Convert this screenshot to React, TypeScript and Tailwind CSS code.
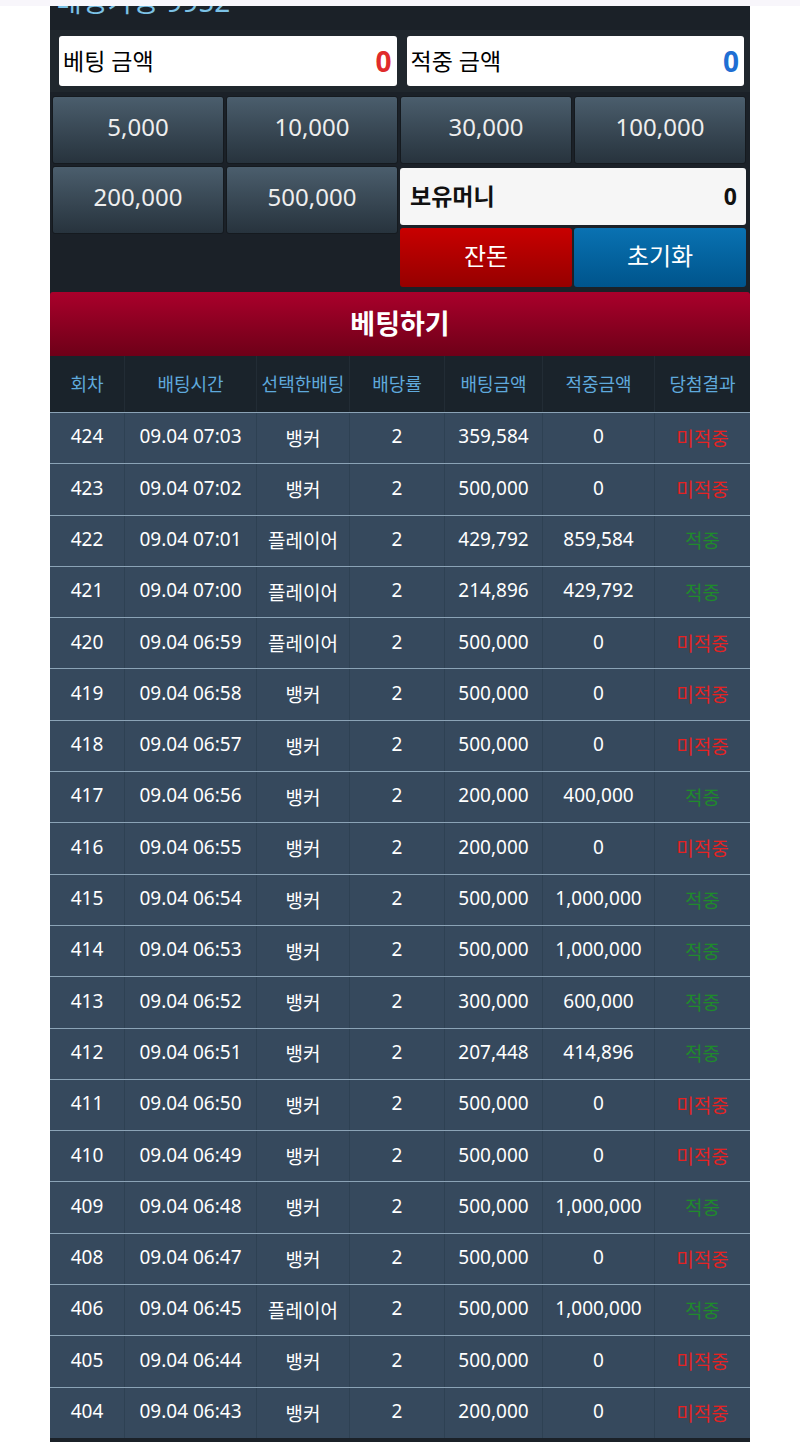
import React from "react";

type Row = {
  no: number;
  time: string;
  pick: string;
  rate: string;
  bet: string;
  win: string;
  hit: boolean;
};

const rows: Row[] = [
  { no: 424, time: "09.04 07:03", pick: "뱅커", rate: "2", bet: "359,584", win: "0", hit: false },
  { no: 423, time: "09.04 07:02", pick: "뱅커", rate: "2", bet: "500,000", win: "0", hit: false },
  { no: 422, time: "09.04 07:01", pick: "플레이어", rate: "2", bet: "429,792", win: "859,584", hit: true },
  { no: 421, time: "09.04 07:00", pick: "플레이어", rate: "2", bet: "214,896", win: "429,792", hit: true },
  { no: 420, time: "09.04 06:59", pick: "플레이어", rate: "2", bet: "500,000", win: "0", hit: false },
  { no: 419, time: "09.04 06:58", pick: "뱅커", rate: "2", bet: "500,000", win: "0", hit: false },
  { no: 418, time: "09.04 06:57", pick: "뱅커", rate: "2", bet: "500,000", win: "0", hit: false },
  { no: 417, time: "09.04 06:56", pick: "뱅커", rate: "2", bet: "200,000", win: "400,000", hit: true },
  { no: 416, time: "09.04 06:55", pick: "뱅커", rate: "2", bet: "200,000", win: "0", hit: false },
  { no: 415, time: "09.04 06:54", pick: "뱅커", rate: "2", bet: "500,000", win: "1,000,000", hit: true },
  { no: 414, time: "09.04 06:53", pick: "뱅커", rate: "2", bet: "500,000", win: "1,000,000", hit: true },
  { no: 413, time: "09.04 06:52", pick: "뱅커", rate: "2", bet: "300,000", win: "600,000", hit: true },
  { no: 412, time: "09.04 06:51", pick: "뱅커", rate: "2", bet: "207,448", win: "414,896", hit: true },
  { no: 411, time: "09.04 06:50", pick: "뱅커", rate: "2", bet: "500,000", win: "0", hit: false },
  { no: 410, time: "09.04 06:49", pick: "뱅커", rate: "2", bet: "500,000", win: "0", hit: false },
  { no: 409, time: "09.04 06:48", pick: "뱅커", rate: "2", bet: "500,000", win: "1,000,000", hit: true },
  { no: 408, time: "09.04 06:47", pick: "뱅커", rate: "2", bet: "500,000", win: "0", hit: false },
  { no: 406, time: "09.04 06:45", pick: "플레이어", rate: "2", bet: "500,000", win: "1,000,000", hit: true },
  { no: 405, time: "09.04 06:44", pick: "뱅커", rate: "2", bet: "500,000", win: "0", hit: false },
  { no: 404, time: "09.04 06:43", pick: "뱅커", rate: "2", bet: "200,000", win: "0", hit: false },
];

const cols = "grid grid-cols-[75px_132px_93px_95px_98px_112px_95px]";
const chip =
  "h-[68px] flex items-center justify-center pb-[6px] rounded-[3px] border border-[#151a1f] bg-gradient-to-b from-[#4b5e6d] to-[#27333d] text-[24px] text-[#eeeeee]";
const cell = "flex items-center justify-center border-r border-[#2e4153] last:border-r-0";
const headCell = "flex items-center justify-center border-r border-[#222c35] last:border-r-0";

export default function App() {
  return (
    <div className="min-h-[1442px] bg-white font-['Noto_Sans','Noto_Sans_CJK_KR',sans-serif]">
      <div className="h-[6px] bg-[#f8f6fb]" />
      <div className="mx-auto w-[700px] bg-[#1b2128]">
        {/* title, scrolled mostly out of view */}
        <div className="h-[24px] overflow-hidden pl-[6px]">
          <div className="-mt-[24px] text-[28px] leading-[38px] text-[#7cc2e6]">배팅가능 9952</div>
        </div>

        {/* amount boxes */}
        <div className="flex gap-[10px] bg-[#20272d] py-[6px] pl-[9px] pr-[6px]">
          <div className="flex h-[50px] flex-1 items-center justify-between rounded-[3px] bg-white pl-[4px] pr-[5px]">
            <span className="text-[23px] text-black">베팅 금액</span>
            <span className="text-[28px] font-bold text-[#e02b2b]">0</span>
          </div>
          <div className="flex h-[50px] flex-1 items-center justify-between rounded-[3px] bg-white pl-[4px] pr-[5px]">
            <span className="text-[23px] text-black">적중 금액</span>
            <span className="text-[28px] font-bold text-[#1f6fd3]">0</span>
          </div>
        </div>

        {/* chips */}
        <div className="grid grid-cols-4 gap-[2px] pb-[5px] pl-[2px] pr-[4px] pt-[4px]">
          <div className={chip}>5,000</div>
          <div className={chip}>10,000</div>
          <div className={chip}>30,000</div>
          <div className={chip}>100,000</div>
          <div className="col-span-2 grid grid-cols-2 gap-[2px] self-start">
            <div className={chip}>200,000</div>
            <div className={chip}>500,000</div>
          </div>
          <div className="col-span-2 flex flex-col gap-[3px] pt-[2px]">
            <div className="flex h-[57px] items-center justify-between rounded-[3px] bg-[#f6f6f6] pl-[10px] pr-[9px]">
              <span className="text-[23px] font-bold text-[#111]">보유머니</span>
              <span className="text-[23px] font-bold text-[#111]">0</span>
            </div>
            <div className="grid grid-cols-2 gap-[2px]">
              <div className="flex h-[59px] items-center justify-center rounded-[3px] bg-gradient-to-b from-[#c80000] to-[#960000] pb-[3px] text-[24px] text-white">
                잔돈
              </div>
              <div className="flex h-[59px] items-center justify-center rounded-[3px] bg-gradient-to-b from-[#0a72b2] to-[#00548c] pb-[3px] text-[24px] text-white">
                초기화
              </div>
            </div>
          </div>
        </div>

        {/* submit */}
        <div className="flex h-[64px] items-center justify-center rounded-t-[3px] bg-gradient-to-b from-[#aa002b] to-[#6e0018] text-[27px] font-bold text-white">
          베팅하기
        </div>

        {/* table header */}
        <div className={`${cols} h-[56px] bg-[#1a232b] text-[18px] text-[#5fa9dc]`}>
          {["회차", "배팅시간", "선택한배팅", "배당률", "배팅금액", "적중금액", "당첨결과"].map((h) => (
            <div key={h} className={headCell}>
              {h}
            </div>
          ))}
        </div>

        {/* rows */}
        {rows.map((r) => (
          <div
            key={r.no}
            className={`${cols} h-[51.3px] border-t border-[#8ba3b6] bg-[#36495d] text-[19px] text-white`}
          >
            <div className={`${cell} pb-[3px]`}>{r.no}</div>
            <div className={`${cell} pb-[3px]`}>{r.time}</div>
            <div className={`${cell} pt-[2px]`}>{r.pick}</div>
            <div className={`${cell} pb-[3px]`}>{r.rate}</div>
            <div className={`${cell} pb-[3px]`}>{r.bet}</div>
            <div className={`${cell} pb-[3px]`}>{r.win}</div>
            <div className={`${cell} pt-[2px] text-[19px] ${r.hit ? "text-[#1f8a2c]" : "text-[#e52222]"}`}>
              {r.hit ? "적중" : "미적중"}
            </div>
          </div>
        ))}
        <div className="h-[4px] bg-[#1b2128]" />
      </div>
    </div>
  );
}
